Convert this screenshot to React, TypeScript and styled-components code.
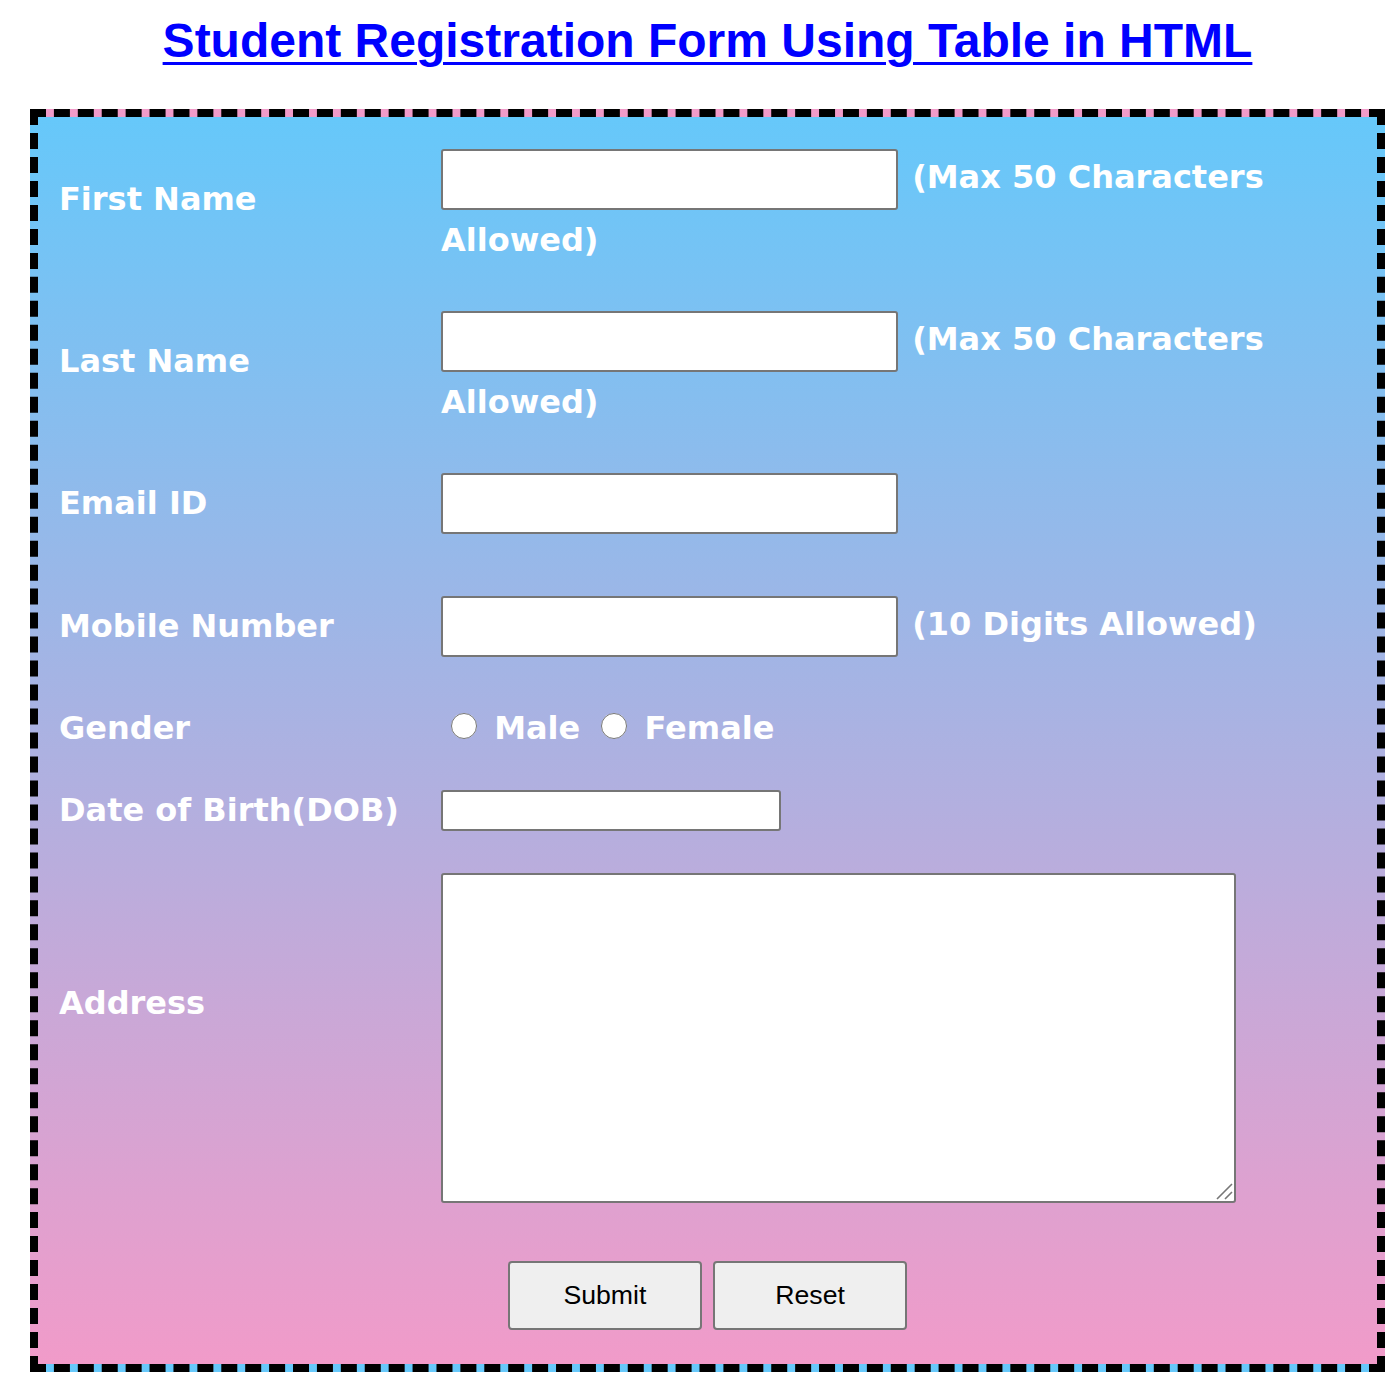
import React from 'react';
import styled, { createGlobalStyle } from 'styled-components';

const GlobalStyle = createGlobalStyle`
  html,
  body {
    margin: 0;
    padding: 0;
    background: #fff;
  }
  body {
    padding-left: 17px;
    font-family: 'DejaVu Sans', Verdana, sans-serif;
  }
`;

const Title = styled.h1`
  margin: 15px 0 42px;
  text-align: center;
  font-family: 'Liberation Sans', Arial, sans-serif;
  font-size: 48px;
  line-height: 52px;
  font-weight: bold;
  color: #0000ff;
  text-decoration: underline;
  text-decoration-thickness: 3px;
  text-underline-offset: 5px;
`;

const FormTable = styled.table`
  box-sizing: border-box;
  width: 1355px;
  margin: 0 auto;
  border: 8px dashed #000;
  border-spacing: 2px;
  background: linear-gradient(to bottom, #66c8fa, #f19bc9);
`;

interface CellProps {
  $wrapped?: boolean;
}

const Cell = styled.td<CellProps>`
  padding: 20px;
  color: #fff;
  font-size: 32px;
  line-height: ${({ $wrapped }) => ($wrapped ? '37px' : '39px')};
  font-weight: bold;
  vertical-align: middle;
`;

interface LabelCellProps {
  $lift?: boolean;
}

// the address label sits one line-height above the middle of its row
const LabelCell = styled.td<LabelCellProps>`
  width: 340px;
  padding: 20px 20px ${({ $lift }) => ($lift ? '98px' : '20px')} 19px;
  white-space: nowrap;
  color: #fff;
  font-size: 32px;
  line-height: 39px;
  font-weight: bold;
  vertical-align: middle;
`;

const ActionCell = styled(Cell)`
  text-align: center;
`;

interface TextBoxProps {
  $size?: 'large' | 'small';
  $wrapped?: boolean;
}

const TextBox = styled.input<TextBoxProps>`
  box-sizing: border-box;
  width: ${({ $size }) => ($size === 'small' ? '340px' : '457px')};
  height: ${({ $size }) => ($size === 'small' ? '41px' : '61px')};
  margin: ${({ $size, $wrapped }) =>
    $size === 'small' ? '0' : $wrapped ? '10px 3px 12px 0' : '10px 3px 10px 0'};
  padding: 0 4px;
  border: 2px solid #767676;
  border-radius: 3px;
  background: #fff;
  font-family: 'Liberation Sans', Arial, sans-serif;
  font-size: 26.67px;
  vertical-align: ${({ $size }) => ($size === 'small' ? 'top' : 'baseline')};
`;

const Radio = styled.input`
  width: 26px;
  height: 26px;
  margin: 4px 6px 0 10px;
  vertical-align: baseline;
`;

const AddressWrap = styled.span`
  position: relative;
  display: inline-block;
  line-height: 0;
  vertical-align: baseline;
`;

const AddressBox = styled.textarea`
  display: block;
  box-sizing: border-box;
  width: 795px;
  height: 330px;
  margin: 0;
  border: 2px solid #767676;
  border-radius: 3px;
  background: #fff;
  font-family: 'Liberation Mono', monospace;
  font-size: 26.67px;
  resize: none;
`;

const Grip = styled.svg`
  position: absolute;
  right: 3px;
  bottom: 3px;
  width: 17px;
  height: 17px;
  pointer-events: none;
`;

const ActionButton = styled.button`
  box-sizing: border-box;
  width: 194px;
  height: 69px;
  margin: 7px 0 12px;
  border: 2px solid #767676;
  border-radius: 4px;
  background: #efefef;
  color: #000;
  font-family: 'Liberation Sans', Arial, sans-serif;
  font-size: 26.67px;
  font-weight: normal;
  vertical-align: baseline;
`;

const FIELDS = [
  { label: 'First Name', hint: '(Max 50 Characters Allowed)', wraps: true },
  { label: 'Last Name', hint: '(Max 50 Characters Allowed)', wraps: true },
  { label: 'Email ID', hint: '', wraps: false },
  { label: 'Mobile Number', hint: '(10 Digits Allowed)', wraps: false },
];

export default function App() {
  return (
    <>
      <GlobalStyle />
      <Title>Student Registration Form Using Table in HTML</Title>
      <form onSubmit={(e) => e.preventDefault()}>
        <FormTable>
          <tbody>
            {FIELDS.map((f) => (
              <tr key={f.label}>
                <LabelCell>{f.label}</LabelCell>
                <Cell $wrapped={f.wraps}>
                  <TextBox type="text" $wrapped={f.wraps} />
                  {f.hint && ' ' + f.hint}
                </Cell>
              </tr>
            ))}
            <tr>
              <LabelCell>Gender</LabelCell>
              <Cell>
                <Radio type="radio" name="gender" /> Male <Radio type="radio" name="gender" /> Female
              </Cell>
            </tr>
            <tr>
              <LabelCell>Date of Birth(DOB)</LabelCell>
              <Cell>
                <TextBox type="text" $size="small" />
              </Cell>
            </tr>
            <tr>
              <LabelCell $lift>Address</LabelCell>
              <Cell>
                <AddressWrap>
                  <AddressBox />
                  <Grip viewBox="0 0 17 17">
                    <path d="M1 16 L16 1 M9 16 L16 9" stroke="#777" strokeWidth="1.6" fill="none" />
                  </Grip>
                </AddressWrap>
              </Cell>
            </tr>
            <tr>
              <ActionCell colSpan={2}>
                <ActionButton type="submit">Submit</ActionButton>{' '}
                <ActionButton type="reset">Reset</ActionButton>
              </ActionCell>
            </tr>
          </tbody>
        </FormTable>
      </form>
    </>
  );
}
